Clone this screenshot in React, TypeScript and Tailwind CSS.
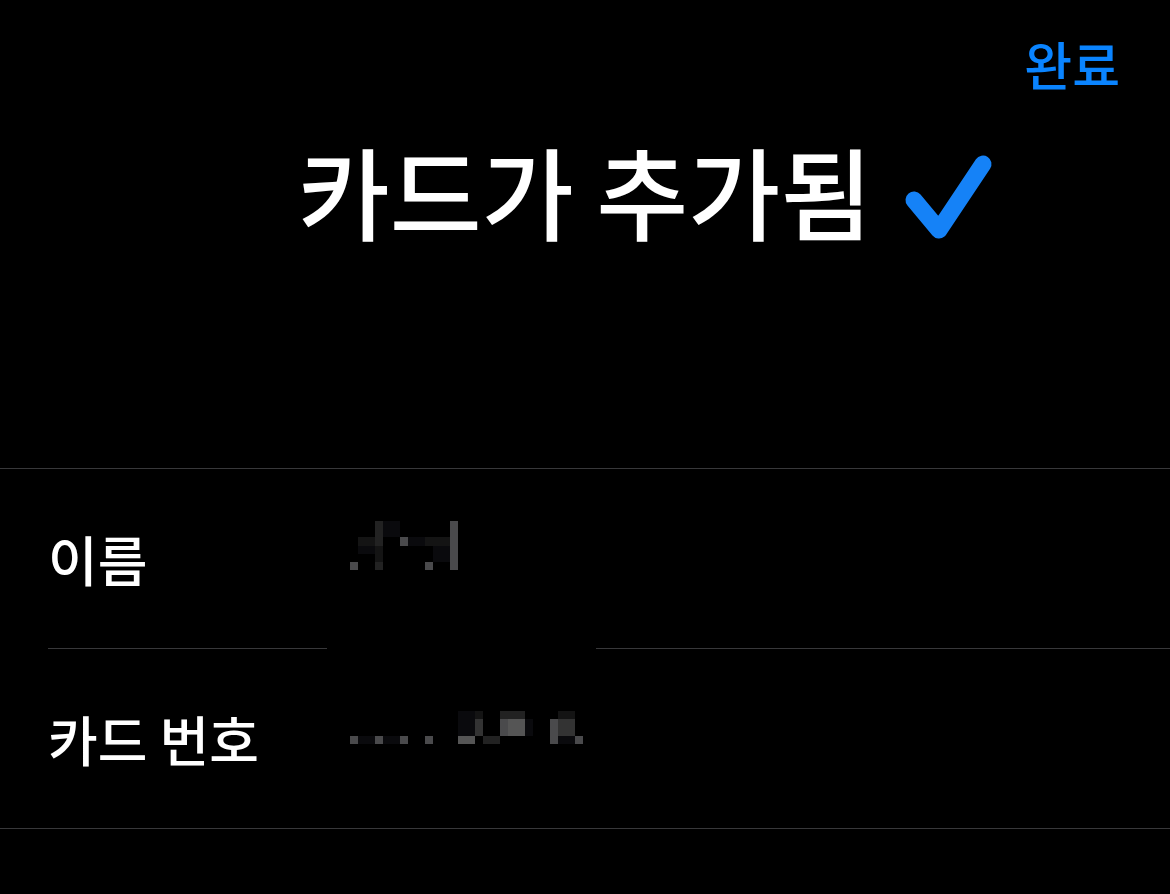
import React from 'react';

// mosaic cells: [row, col, shade]
type Cell = [number, number, number];

const shades = ['bg-[#0a0a0d]', 'bg-[#141414]', 'bg-[#222222]', 'bg-[#333333]', 'bg-[#4a4a4c]', 'bg-[#555555]'];

const nameCells: Cell[] = [
  [0, 3, 2], [0, 4, 0], [0, 5, 0], [0, 12, 4],
  [1, 3, 2], [1, 4, 0], [1, 5, 0], [1, 12, 4],
  [2, 1, 1], [2, 2, 1], [2, 3, 2], [2, 6, 4], [2, 7, 0], [2, 8, 0], [2, 9, 1], [2, 10, 1], [2, 11, 1], [2, 12, 4],
  [3, 1, 0], [3, 2, 0], [3, 3, 1], [3, 10, 0], [3, 11, 0], [3, 12, 4],
  [4, 3, 1], [4, 10, 0], [4, 11, 0], [4, 12, 4],
  [5, 0, 4], [5, 3, 2], [5, 9, 4], [5, 12, 4],
];

const numberCells: Cell[] = [
  [0, 13, 0], [0, 14, 0], [0, 15, 1], [0, 18, 2], [0, 19, 2], [0, 20, 2], [0, 25, 1], [0, 26, 1],
  [1, 13, 0], [1, 14, 0], [1, 15, 3], [1, 18, 4], [1, 19, 5], [1, 20, 5], [1, 21, 0], [1, 24, 4], [1, 25, 3], [1, 26, 3],
  [2, 13, 0], [2, 14, 0], [2, 15, 3], [2, 18, 4], [2, 19, 5], [2, 20, 5], [2, 21, 0], [2, 24, 4], [2, 25, 3], [2, 26, 3],
  [3, 0, 4], [3, 1, 0], [3, 2, 0], [3, 3, 4], [3, 4, 0], [3, 5, 0], [3, 6, 4], [3, 9, 4], [3, 13, 5], [3, 14, 5], [3, 16, 2], [3, 17, 2], [3, 24, 4], [3, 25, 0], [3, 26, 0], [3, 27, 4],
];

function Mosaic({ cells }: { cells: Cell[] }) {
  return (
    <div className="grid grid-cols-[repeat(28,8.33px)] grid-rows-[repeat(6,8.33px)]">
      {cells.map(([r, c, s]) => (
        <div
          key={`${r}-${c}`}
          className={shades[s]}
          style={{ gridRow: r + 1, gridColumn: c + 1 }}
        />
      ))}
    </div>
  );
}

export default function App() {
  return (
    <main
      className="h-[894px] w-full bg-black text-white overflow-hidden flex flex-col"
      style={{ fontFamily: '"Noto Sans CJK KR", "Noto Sans", sans-serif' }}
    >
      {/* Top bar */}
      <div className="flex justify-end pr-[50px] pt-[17px] h-[110px]">
        <button className="text-[52px] leading-none font-medium text-[#0a84ff]">완료</button>
      </div>

      {/* Title */}
      <div className="flex justify-center mt-[30px]">
        <h1 className="relative text-[100px] leading-none font-medium">
          카드가 추가됨
          <svg
            className="absolute left-full top-[9px] ml-[29px]"
            width="96"
            height="96"
            viewBox="0 0 96 96"
            fill="none"
          >
            <path
              d="M13 51 L38 81 L82 15"
              stroke="#1582f7"
              strokeWidth="17"
              strokeLinecap="round"
              strokeLinejoin="round"
            />
          </svg>
        </h1>
      </div>

      {/* Details list */}
      <div className="relative mt-[228px] border-t border-b border-[#38383a]">
        <div className="flex items-center h-[179px] pl-[48px]">
          <span className="w-[302px] text-[54px] leading-none font-medium">이름</span>
          <div className="mt-[-26px]">
            <Mosaic cells={nameCells} />
          </div>
        </div>
        <div className="ml-[48px] border-t border-[#38383a]" />
        <div className="flex items-center h-[179px] pl-[48px]">
          <span className="w-[302px] text-[54px] leading-none font-medium">카드 번호</span>
          <div className="mt-[-6px]">
            <Mosaic cells={numberCells} />
          </div>
        </div>
        {/* redaction box over the middle separator */}
        <div className="absolute left-[327px] top-[170px] w-[269px] h-[20px] bg-black" />
      </div>
    </main>
  );
}
